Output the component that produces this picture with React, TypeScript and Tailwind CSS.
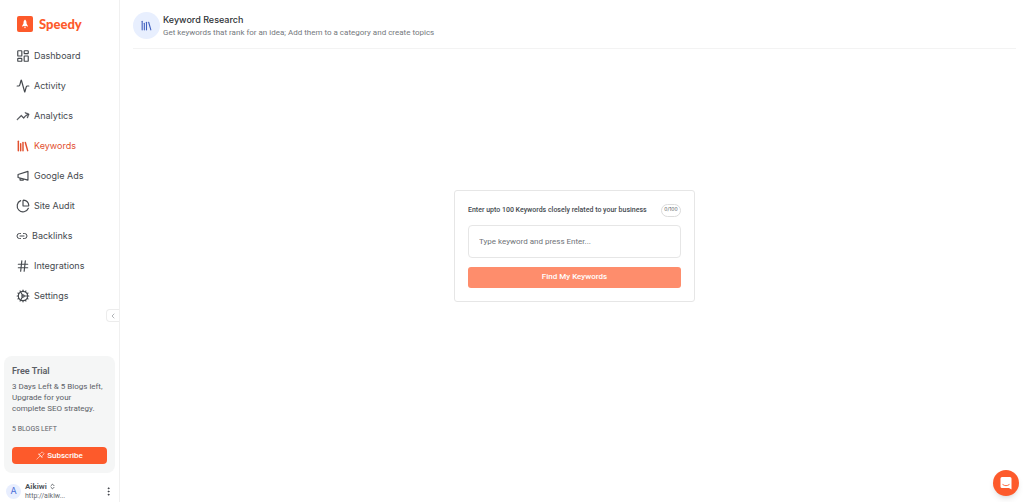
import type { ReactNode } from "react";
import {
  Activity,
  ChartPie,
  ChevronLeft,
  ChevronsUpDown,
  Cog,
  EllipsisVertical,
  Hash,
  LayoutDashboard,
  Library,
  Link2,
} from "lucide-react";
import { HiArrowTrendingUp } from "react-icons/hi2";

type NavItem = {
  label: string;
  icon: ReactNode;
  active?: boolean;
};

function MegaphoneIcon() {
  return (
    <svg viewBox="0 0 24 24" className="size-[14px]" fill="none" stroke="currentColor" strokeWidth="2" strokeLinejoin="round" aria-hidden="true">
      <path d="M20.500 4v15L3.500 14.500V9.500Z" />
      <path d="M7 15.500v3.500h5.500v-2" />
    </svg>
  );
}

const navItems: NavItem[] = [
  { label: "Dashboard", icon: <LayoutDashboard size={14} strokeLinejoin="miter" /> },
  { label: "Activity", icon: <Activity size={14} /> },
  { label: "Analytics", icon: <HiArrowTrendingUp size={14} stroke="currentColor" strokeWidth={0.6} /> },
  { label: "Keywords", icon: <Library size={14} strokeWidth={2.5} />, active: true },
  { label: "Google Ads", icon: <MegaphoneIcon /> },
  { label: "Site Audit", icon: <ChartPie size={14} /> },
  { label: "Backlinks", icon: <Link2 size={12} /> },
  { label: "Integrations", icon: <Hash size={14} /> },
  { label: "Settings", icon: <Cog size={14} /> },
];

function Logo() {
  return (
    <a href="#" className="flex h-4 items-center gap-[6px] pl-[17px] text-[#fd5a2b]">
      <svg viewBox="0 0 16 16" className="size-4" aria-hidden="true">
        <rect width="16" height="16" rx="2" fill="currentColor" />
        <path d="M8 3.500C6.900 4.500 6.500 5.600 6.500 7v2.400h3V7C9.500 5.600 9.100 4.500 8 3.500Z" fill="#fff" />
        <path d="M6.400 7.800 5.200 9.700v1l1.500-.700h2.600l1.500.700v-1L9.600 7.800Z" fill="#fff" />
        <path d="M7.400 10.400h1.200v1.200L8 12.400l-.6-.8Z" fill="#fff" />
      </svg>
      <span className="font-[Lato,sans-serif] text-[13px] leading-4 font-black">Speedy</span>
    </a>
  );
}

function TrialCard() {
  return (
    <section className="mx-1 rounded-lg bg-[#f5f6f6] px-2 pt-[10px] pb-[9px] text-[#5b6066]">
      <h2 className="text-[9px] leading-[11px] font-semibold">Free Trial</h2>
      <p className="mt-1 text-[8px] leading-[11px]">
        3 Days Left & 5 Blogs left,
        <br />
        Upgrade for your
        <br />
        complete SEO strategy.
      </p>
      <p className="mt-[10px] text-[7px] leading-[10px]">5 BLOGS LEFT</p>
      <button className="mt-[13px] flex h-[17px] w-full items-center justify-center gap-[2px] rounded bg-[#fd5a2b] text-[8px] font-medium text-white">
        <svg viewBox="0 0 16 16" className="size-[9px]" fill="none" stroke="currentColor" strokeLinecap="round" strokeLinejoin="round" aria-hidden="true">
          <path d="m1.500 14.500 6-6M5.500 5.500l5 5M5 5.500c1.500.3 2.500-.3 3.500-1.500L11 1.500 14.500 5 12 7.500c-1.200 1-1.800 2-1.500 3.500Z" />
        </svg>
        Subscribe
      </button>
    </section>
  );
}

function UserRow() {
  return (
    <div className="mt-2 mb-px flex h-5 items-center pr-[5px] pl-[6px]">
      <span className="flex size-[15px] items-center justify-center rounded-full bg-[#e8eefe] font-[Inter,sans-serif] text-[9px] text-[#4a6fd8]">
        A
      </span>
      <div className="ml-1 flex-1">
        <button className="flex items-center gap-[2px] text-[8px] leading-[10px] font-semibold text-[#4c5157]">
          Aikiwi
          <ChevronsUpDown size={7} strokeWidth={3} />
        </button>
        <p className="text-[7px] leading-[9px] text-[#666a70]">http://aikiw...</p>
      </div>
      <button aria-label="Account menu" className="text-[#33373d]">
        <EllipsisVertical size={11} />
      </button>
    </div>
  );
}

function Sidebar() {
  return (
    <aside className="flex w-[120px] shrink-0 flex-col border-r border-[#f0f0f0] pt-4">
      <Logo />
      <nav className="mt-[9px] font-[Inter,sans-serif]">
        {navItems.map((item) => (
          <a
            key={item.label}
            href="#"
            className={`flex h-[30px] items-center gap-1 pl-4 text-[9px] ${
              item.active ? "text-[#e2502f]" : "text-[#45494e]"
            }`}
          >
            {item.icon}
            {item.label}
          </a>
        ))}
      </nav>
      <button
        aria-label="Collapse sidebar"
        className="-mt-[2px] flex h-[13px] w-[13px] items-center justify-center self-end rounded-l border border-r-0 border-[#ececec] text-[#8b8f94]"
      >
        <ChevronLeft size={8} />
      </button>
      <div className="mt-auto">
        <TrialCard />
        <UserRow />
      </div>
    </aside>
  );
}

function KeywordForm() {
  return (
    <form className="w-[241px] rounded-[3px] border border-[#e6e6e6] p-[13px]">
      <div className="flex items-center justify-between">
        <label htmlFor="keyword" className="text-[7px] leading-[13px] font-medium text-[#454b50]">
          Enter upto 100 Keywords closely related to your business
        </label>
        <span className="flex h-[13px] w-5 items-center justify-center rounded-full border border-[#dcdcdc] font-[Inter,sans-serif] text-[5px] text-[#55595e]">
          0/100
        </span>
      </div>
      <input
        id="keyword"
        type="text"
        placeholder="Type keyword and press Enter..."
        className="mt-2 block h-[33px] w-full rounded border border-[#e6e6e6] px-[10px] text-[8px] outline-none placeholder:text-[#6f7378]"
      />
      <button
        type="button"
        className="mt-[9px] block h-[21px] w-full rounded-[3px] bg-[#fe8d6c] text-[8px] font-medium text-white"
      >
        Find My Keywords
      </button>
    </form>
  );
}

export default function App() {
  return (
    <div className="flex min-h-screen bg-white font-[Roboto,sans-serif]">
      <Sidebar />
      <main className="flex flex-1 flex-col pr-2 pl-[13px]">
        <header className="flex h-[49px] items-center gap-[3px] border-b border-[#f3f3f3] pt-[3px]">
          <span className="flex size-[27px] items-center justify-center rounded-full bg-[#e8effe] text-[#3f5fbf]">
            <Library size={13} />
          </span>
          <div className="pt-[2px]">
            <h1 className="font-[Inter,sans-serif] text-[9px] leading-[13px] font-medium text-[#2e3236]">
              Keyword Research
            </h1>
            <p className="text-[8px] leading-[14px] text-[#74787d]">
              Get keywords that rank for an idea; Add them to a category and create topics
            </p>
          </div>
        </header>
        <div className="flex flex-1 items-center justify-center pb-[60px]">
          <KeywordForm />
        </div>
      </main>
      <button
        aria-label="Open chat"
        className="fixed right-[5px] bottom-[6px] flex size-[26px] items-center justify-center rounded-full bg-[#fd5a2b] shadow-md"
      >
        <svg viewBox="0 0 14 14" className="size-[14px]" aria-hidden="true">
          <path d="M3 1h8a1.500 1.500 0 0 1 1.500 1.500V13.500L10 12H3a1.500 1.500 0 0 1-1.500-1.500v-8A1.500 1.500 0 0 1 3 1Z" fill="#fff" />
          <path d="M3.800 8.600c2 1.500 4.400 1.500 6.400 0" fill="none" stroke="#fd5a2b" strokeWidth=".9" strokeLinecap="round" />
        </svg>
      </button>
    </div>
  );
}
